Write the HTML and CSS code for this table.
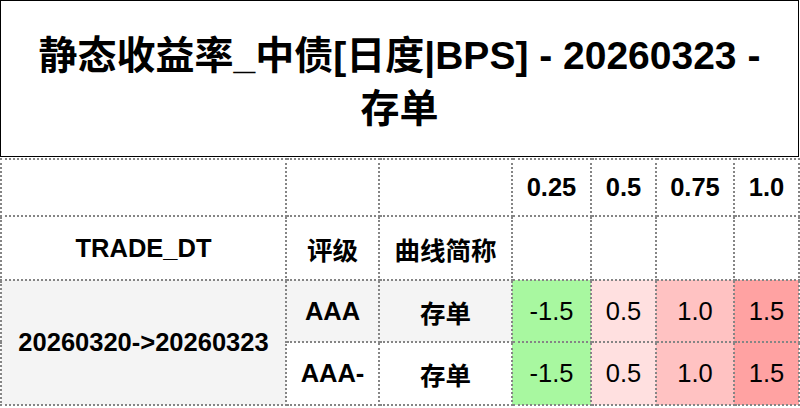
FILE: index.html
```html
<!DOCTYPE html>
<html lang="zh">
<head>
<meta charset="utf-8">
<link rel="stylesheet" href="styles.css">
</head>
<body>
<div class="title">静态收益率_中债[日度|BPS] - 20260323 -<br>存单</div>
<table class="grid">
  <colgroup>
    <col class="c1"><col class="c2"><col class="c3"><col class="c4"><col class="c5"><col class="c6"><col class="c7">
  </colgroup>
  <tr class="h1">
    <th></th><th></th><th></th><th>0.25</th><th>0.5</th><th>0.75</th><th>1.0</th>
  </tr>
  <tr class="h2">
    <th>TRADE_DT</th><th>评级</th><th>曲线简称</th><th></th><th></th><th></th><th></th>
  </tr>
  <tr class="r1">
    <th rowspan="2" class="stripe">20260320-&gt;20260323</th>
    <th class="stripe">AAA</th><th class="stripe">存单</th>
    <td class="g">-1.5</td><td class="p1">0.5</td><td class="p2">1.0</td><td class="p3">1.5</td>
  </tr>
  <tr class="r2">
    <th>AAA-</th><th>存单</th>
    <td class="g">-1.5</td><td class="p1">0.5</td><td class="p2">1.0</td><td class="p3">1.5</td>
  </tr>
</table>
</body>
</html>
```
FILE: styles.css
```css
html, body {
  margin: 0;
  padding: 0;
  background: #ffffff;
}
body {
  width: 800px;
  font-family: "Liberation Sans", "Noto Sans CJK SC", sans-serif;
  color: #000;
}
.title {
  box-sizing: border-box;
  width: 799px;
  height: 157px;
  border: 1px solid #000;
  padding-top: 28px;
  text-align: center;
  font-size: 39px;
  font-weight: bold;
  line-height: 53px;
}
.grid {
  margin-top: 1px;
  width: 800px;
  border-collapse: collapse;
  table-layout: fixed;
  font-size: 25.5px;
}
.c1 { width: 285px; }
.c2 { width: 93px; }
.c3 { width: 133px; }
.c4 { width: 79px; }
.c5 { width: 65px; }
.c6 { width: 78px; }
.c7 { width: 65px; }
.grid th, .grid td {
  border: 2px dotted #858585;
  padding: 0;
  text-align: center;
  vertical-align: middle;
  white-space: nowrap;
}
.grid th { font-weight: bold; }
.grid td { font-weight: normal; }
.h1 th { height: 55px; }
.h2 th { height: 62px; }
.r1 th, .r1 td { height: 60px; }
.r2 th, .r2 td { height: 61px; }
.stripe { background: #f4f4f4; }
.g { background: #a8f8a0; }
.p1 { background: #ffe0e0; }
.p2 { background: #ffc2c2; }
.p3 { background: #ffa2a2; }
```
